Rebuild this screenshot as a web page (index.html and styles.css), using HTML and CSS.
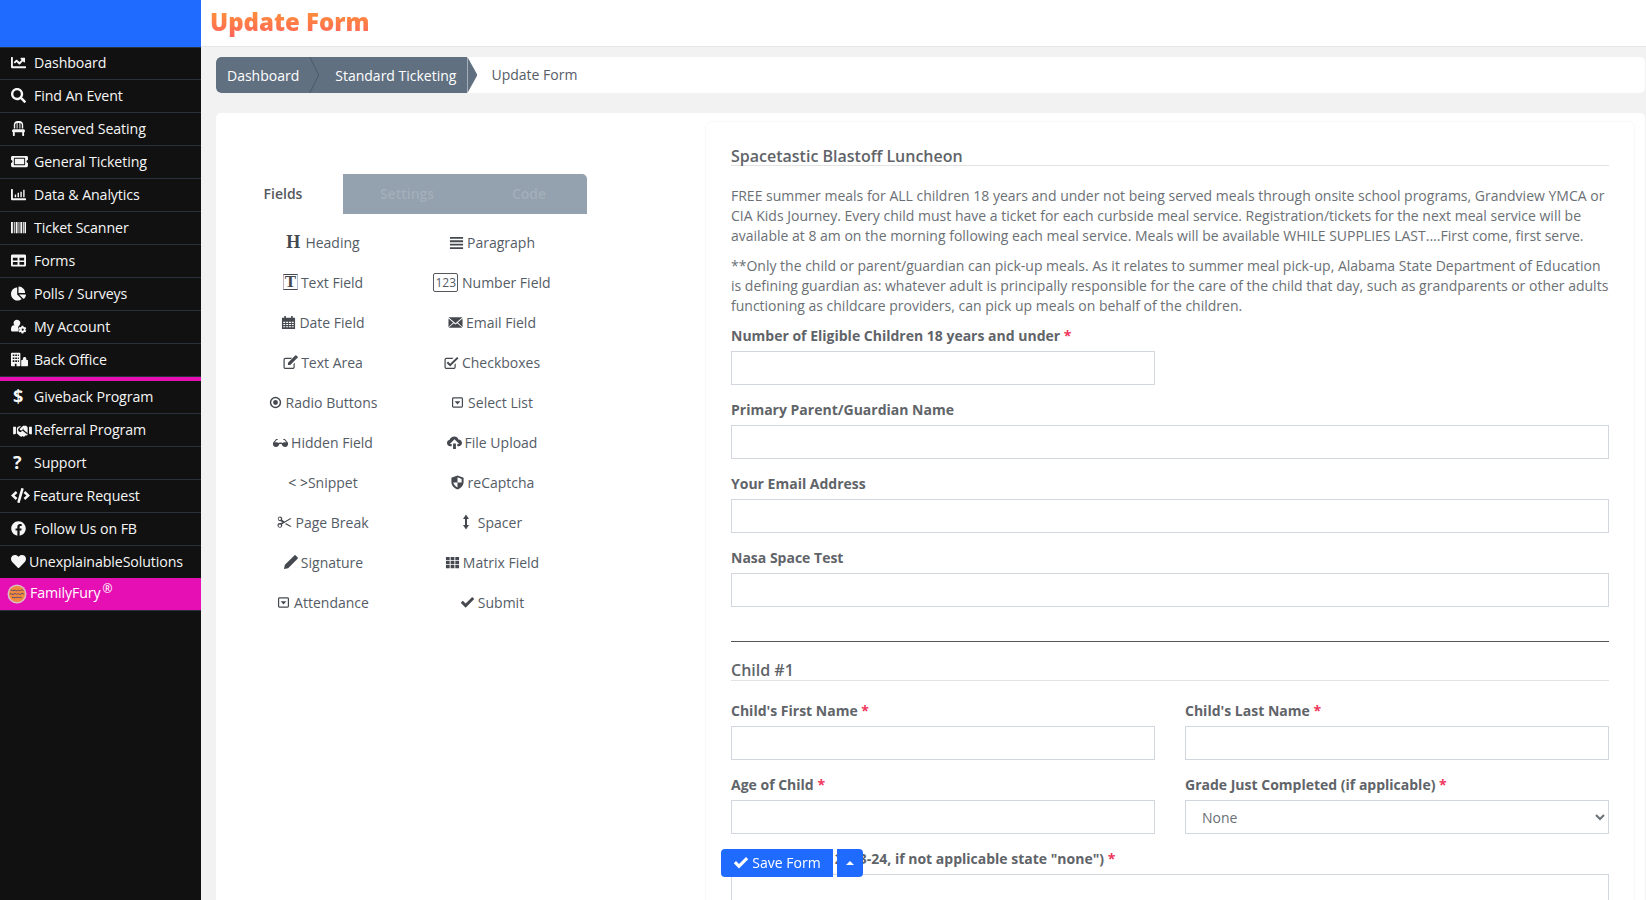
FILE: index.html
```html
<!DOCTYPE html>
<html lang="en">
<head>
<meta charset="utf-8">
<title>Update Form</title>
<link rel="stylesheet" href="styles.css">
</head>
<body>
<svg class="defs" aria-hidden="true">
  <symbol id="i-line" viewBox="0 0 512 512"><path d="M496 384H64V80c0-9-7-16-16-16H16C7 64 0 71 0 80v336c0 18 14 32 32 32h464c9 0 16-7 16-16v-32c0-9-7-16-16-16zM464 96H346c-21 0-32 26-17 41l32 32-74 74-73-73c-13-13-33-13-46 0l-68 68c-6 6-6 16 0 23l23 23c6 6 16 6 23 0l45-46 73 74c13 13 33 13 46 0l96-97 32 33c15 15 41 4 41-17V112c0-9-7-16-16-16z"/></symbol>
  <symbol id="i-search" viewBox="0 0 512 512"><path d="M505 443 405 343c-4-5-10-7-17-7h-16c28-35 44-80 44-128C416 93 323 0 208 0S0 93 0 208s93 208 208 208c48 0 93-16 128-44v16c0 7 2 13 7 17l100 100c9 9 24 9 34 0l28-28c9-10 9-25 0-34zM208 336c-71 0-128-57-128-128S137 80 208 80s128 57 128 128-57 128-128 128z"/></symbol>
  <symbol id="i-chair" viewBox="0 0 448 512"><path d="M112 128c0-30 20-54 48-62v190h32V64h64v192h32V66c28 8 48 32 48 62v128h48V128C384 57 327 0 256 0h-64C121 0 64 57 64 128v128h48V128zm333 209-11-32c-4-13-16-21-30-21H44c-14 0-26 8-30 21L3 337c-7 21 8 43 30 43v116c0 9 7 16 16 16h32c9 0 16-7 16-16V380h254v116c0 9 7 16 16 16h32c9 0 16-7 16-16V380c22 0 37-22 30-43z"/></symbol>
  <symbol id="i-ticket" viewBox="0 0 576 512"><path d="M128 160h320v192H128V160zm400 96c0 27 21 48 48 48v96c0 27-21 48-48 48H48c-27 0-48-21-48-48v-96c27 0 48-21 48-48s-21-48-48-48v-96c0-27 21-48 48-48h480c27 0 48 21 48 48v96c-27 0-48 21-48 48zm-48-104c0-13-11-24-24-24H120c-13 0-24 11-24 24v208c0 13 11 24 24 24h336c13 0 24-11 24-24V152z"/></symbol>
  <symbol id="i-bar" viewBox="0 0 512 512"><path d="M332 352h24c6 0 12-6 12-12V172c0-6-6-12-12-12h-24c-6 0-12 6-12 12v168c0 6 6 12 12 12zm96 0h24c6 0 12-6 12-12V108c0-6-6-12-12-12h-24c-6 0-12 6-12 12v232c0 6 6 12 12 12zm-288 0h24c6 0 12-6 12-12v-72c0-6-6-12-12-12h-24c-6 0-12 6-12 12v72c0 6 6 12 12 12zm96 0h24c6 0 12-6 12-12V204c0-6-6-12-12-12h-24c-6 0-12 6-12 12v136c0 6 6 12 12 12zm260 32H64V80c0-9-7-16-16-16H16C7 64 0 71 0 80v336c0 18 14 32 32 32h464c9 0 16-7 16-16v-32c0-9-7-16-16-16z"/></symbol>
  <symbol id="i-barcode" viewBox="0 0 512 512"><path d="M0 64h64v384H0zM96 64h32v384H96zM160 64h64v384h-64zM256 64h32v384h-32zM320 64h64v384h-64zM416 64h32v384h-32zM464 64h48v384h-48z"/></symbol>
  <symbol id="i-table" viewBox="0 0 512 512"><path d="M48 48h416c27 0 48 21 48 48v320c0 27-21 48-48 48H48c-27 0-48-21-48-48V96c0-27 21-48 48-48zm16 112v96h160v-96H64zm224 0v96h160v-96H288zM64 304v96h160v-96H64zm224 0v96h160v-96H288z" fill-rule="evenodd"/></symbol>
  <symbol id="i-pie" viewBox="0 0 544 512"><path d="M528 288H290l158 158c6 6 16 6 22 1 39-36 65-85 73-141 1-10-6-18-15-18zm-16-64C504 103 409 8 288 0c-9-1-16 7-16 16v224h224c9 0 17-7 16-16zM224 288V50c0-9-8-16-18-15C87 52-4 156 0 280c4 127 114 232 241 232 51 0 98-17 136-45 7-5 8-16 2-22L224 288z"/></symbol>
  <symbol id="i-usercog" viewBox="0 0 640 512"><path d="M224 256c71 0 128-57 128-128S295 0 224 0 96 57 96 128s57 128 128 128zm319 98 26-15c3-2 4-5 3-8-7-21-18-40-33-56-2-3-5-3-8-2l-26 15c-11-9-23-16-36-21v-30c0-3-2-6-5-7-22-5-44-5-66 0-3 1-5 4-5 7v30c-13 5-25 12-36 21l-26-15c-3-1-6-1-8 2-15 16-26 35-33 56-1 3 0 6 3 8l26 15c-2 14-2 28 0 42l-26 15c-3 2-4 5-3 8 7 21 18 40 33 56 2 3 5 3 8 2l26-15c11 9 23 16 36 21v30c0 3 2 6 5 7 22 5 44 5 66 0 3-1 5-4 5-7v-30c13-5 25-12 36-21l26 15c3 1 6 1 8-2 15-16 26-35 33-56 1-3 0-6-3-8l-26-15c2-14 2-28 0-42zm-103 61a40 40 0 1 1 0-80 40 40 0 0 1 0 80zM315 501c-7-10-11-23-11-36v-10c-28-22-33-62-11-90l-1-12c-30-36-26-85 0-118 5-5 10-9 16-13-15-6-28-9-44-9h-17c-22 10-47 16-73 16s-51-6-73-16h-17C60 213 0 273 0 347v37c0 35 29 64 64 64h251v53z"/></symbol>
  <symbol id="i-building" viewBox="0 0 640 512"><path d="M32 0h288c18 0 32 14 32 32v448c0 18-14 32-32 32H208v-96h-64v96H32c-18 0-32-14-32-32V32C0 14 14 0 32 0zm32 64v64h64V64H64zm0 112v64h64v-64H64zm0 112v64h64v-64H64zM160 64v64h64V64h-64zm0 112v64h64v-64h-64zm0 112v64h64v-64h-64zM256 64v64h40V64h-40zm0 112v64h40v-64h-40zm0 112v64h40v-64h-40z" fill-rule="evenodd"/><path d="M384 512V280l64-16v-48c0-30 30-56 64-56s64 26 64 56v48l64 16v200c0 18-14 32-32 32H384z"/></symbol>
  <symbol id="i-hands" viewBox="0 0 640 512"><path d="M434 128H354c-8 0-15 3-21 8l-92 84c-16 15-17 41-2 56 14 15 42 16 56 2l62-57c3-2 8-2 11 1 3 3 3 8 0 11l-26 24 146 119c3 2 5 5 7 7V180l-28-28c-6-6-14-24-33-24zM544 160v224c0 18 14 32 32 32h64V160h-96zM0 416h64c18 0 32-14 32-32V160H0v256zm462-4L316 293l-29 27c-29 26-73 24-99-4-27-29-25-73 4-100l80-73h-65c-19 0-27 18-33 24l-46 33v204h18l91 82c27 22 67 18 90-9l1-1 18 15c16 13 39 11 52-5l31-38 5 5c14 11 34 9 45-5l9-12c11-14 9-34-5-45z"/></symbol>
  <symbol id="i-code" viewBox="0 0 640 512"><path d="m278 511-61-18c-6-2-10-8-8-15L345 9c2-6 8-10 15-8l61 18c6 2 10 8 8 15L293 503c-2 6-9 10-15 8zM164 399l44-47c4-5 4-13-1-17l-91-79 91-79c5-4 5-12 1-17l-44-47c-4-5-12-5-17-1L4 247c-5 5-5 13 0 18l143 134c5 4 13 4 17 0zm329 0 143-134c5-5 5-13 0-18L493 113c-5-4-13-4-17 1l-44 47c-4 5-4 13 1 17l91 78-91 79c-5 4-5 12-1 17l44 47c4 5 12 5 17 0z"/></symbol>
  <symbol id="i-fb" viewBox="0 0 512 512"><path d="M504 256C504 119 393 8 256 8S8 119 8 256c0 124 91 227 209 245V328h-63v-72h63v-55c0-62 37-96 94-96 27 0 55 5 55 5v61h-31c-31 0-40 19-40 39v46h69l-11 72h-58v173c118-18 209-121 209-245z"/></symbol>
  <symbol id="i-heart" viewBox="0 0 512 512"><path d="M462 62c-55-47-136-38-186 14l-20 20-20-20C186 24 105 15 50 62-13 116-16 212 40 270l193 199c13 13 33 13 46 0l193-199c56-58 53-154-10-208z"/></symbol>
  <symbol id="i-bars" viewBox="0 0 16 16"><path d="M1 2h14v1.900H1zM1 5.700h14v1.900H1zM1 9.400h14v1.900H1zM1 13.100h14V15H1z"/></symbol>
  <symbol id="i-cal" viewBox="0 0 16 16"><path d="M1 3h2.500V1h1.700v2h5.600V1h1.700v2H15v12H1zM2.400 7.200v1.200h2.100V7.200zm3.100 0v1.200h2.100V7.200zm3 0v1.200h2.100V7.200zm3 0v1.200h2.100V7.200zM2.400 9.500v1.200h2.100V9.500zm3.100 0v1.200h2.100V9.500zm3 0v1.200h2.100V9.500zm3 0v1.200h2.100V9.500zM2.400 11.900v1.200h2.100v-1.200zm3.100 0v1.200h2.100v-1.200zm3 0v1.200h2.100v-1.200zm3 0v1.200h2.100v-1.200z" fill-rule="evenodd"/></symbol>
  <symbol id="i-mail" viewBox="0 0 16 16"><path d="M.5 2.500h15L8 8.700zM.5 3.700l5 4.300-5 5zM15.500 3.700V13l-5-5zM6.200 8.700 8 10.200l1.800-1.500 5.500 5H.7z"/></symbol>
  <symbol id="i-edit" viewBox="0 0 16 16"><path d="M2.800 3h7L8.500 4.300H2.800c-.5 0-1 .5-1 1v7.400c0 .5.500 1 1 1h7.400c.5 0 1-.5 1-1V9.500l1.300-1.300v4.500c0 1.300-1 2.300-2.300 2.300H2.800C1.500 15 .5 14 .5 12.700V5.300C.5 4 1.500 3 2.800 3zM12 1.500l2.400 2.400-6.700 6.800H5.300V8.300zM13 .5l.900-.3 2 2-.3 .9-1 1L12 1.500z"/></symbol>
  <symbol id="i-checks" viewBox="0 0 16 16"><path d="M2.800 3h7.400l-1.300 1.300H2.800c-.5 0-1 .5-1 1v7.400c0 .5.500 1 1 1h7.400c.5 0 1-.5 1-1V10l1.300-1.300v4c0 1.300-1 2.300-2.300 2.300H2.800C1.500 15 .5 14 .5 12.700V5.300C.5 4 1.500 3 2.800 3zM6.500 12.200 2.800 8.500l1.500-1.500 2.200 2.200L14 2l1.500 1.500z"/></symbol>
  <symbol id="i-radio" viewBox="0 0 16 16"><path d="M8 1a7 7 0 1 1 0 14A7 7 0 0 1 8 1zm0 1.800a5.200 5.200 0 1 0 0 10.400A5.200 5.200 0 0 0 8 2.800zM8 5a3 3 0 1 1 0 6 3 3 0 0 1 0-6z" fill-rule="evenodd"/></symbol>
  <symbol id="i-caretbox" viewBox="0 0 16 16"><path d="M3 1.500h10c1 0 1.800.8 1.800 1.800v9.400c0 1-.8 1.800-1.800 1.800H3c-1 0-1.800-.8-1.800-1.800V3.300c0-1 .8-1.800 1.800-1.800zm0 1.500c-.2 0-.3.100-.3.300v9.400c0 .2.100.3.300.3h10c.2 0 .3-.1.300-.3V3.300c0-.2-.1-.3-.3-.3zm1.500 3.500h7L8 10.500z" fill-rule="evenodd"/></symbol>
  <symbol id="i-glasses" viewBox="0 0 16 16"><path d="M3.300 4.200h1.500l.3 1H3.900L1.600 8.100c1.300-.6 3.500-.6 4.600.4.500-.3 1.100-.4 1.800-.4s1.300.1 1.800.4c1.100-1 3.300-1 4.600-.4l-2.300-2.900h-1.200l.3-1h1.500L16 8.300v1.600c0 1.700-1.300 2.900-3.100 2.900-1.900 0-3.300-1.300-3.500-2.900-.5-.3-2.300-.3-2.800 0-.2 1.600-1.600 2.900-3.500 2.900C1.300 12.800 0 11.600 0 9.900V8.300z"/></symbol>
  <symbol id="i-cloud" viewBox="0 0 16 16"><path d="M8 1.500c2 0 3.700 1.300 4.200 3.200C14.400 4.800 16 6.500 16 8.500c0 2-1.600 3.500-3.600 3.500H11V9.500h2L8 4.500l-5 5h2V12H3.500C1.500 12 0 10.500 0 8.500c0-1.700 1.200-3.100 2.800-3.400C3.300 3 5.500 1.500 8 1.500zM6.500 9h3v6h-3z"/></symbol>
  <symbol id="i-shield" viewBox="0 0 16 16"><path d="M8 .5 14.500 2.800v5c0 3.500-2.500 6.200-6.500 7.700-4-1.500-6.500-4.200-6.500-7.700v-5zm0 2V8H3.600c.3 2.300 2.100 4 4.400 5.200V8h4.400V4.200z" fill-rule="evenodd"/></symbol>
  <symbol id="i-scissors" viewBox="0 0 16 16"><path d="M3 1.500a2.600 2.600 0 0 1 2.400 3.600L8 6.800l6-3.400 1.800.3L5.400 9.900A2.600 2.600 0 1 1 4 8.600l1.800-1-1.700-.9A2.600 2.600 0 1 1 3 1.500zm0 1.300a1.300 1.300 0 1 0 0 2.600 1.300 1.300 0 0 0 0-2.600zm0 7.300a1.300 1.300 0 1 0 0 2.600 1.300 1.300 0 0 0 0-2.600zM9.900 8.900l5.900 3.300-1.800.3-5.500-2.800z" fill-rule="evenodd"/></symbol>
  <symbol id="i-arrows" viewBox="4 0 8 16"><path d="M8 .5 11 5H9v6h2l-3 4.500L5 11h2V5H5z"/></symbol>
  <symbol id="i-pencil" viewBox="0 0 16 16"><path d="M11 1.500l3.500 3.500-9 9L1 15l1-4.500zM12 .5l1-.5 3 3-.5 1-1 1L11 1.500z"/></symbol>
  <symbol id="i-grid" viewBox="0 0 16 16"><path d="M1 2h4v3.500H1zM6 2h4v3.500H6zM11 2h4v3.500h-4zM1 6.300h4v3.400H1zM6 6.300h4v3.400H6zM11 6.300h4v3.400h-4zM1 10.500h4V14H1zM6 10.500h4V14H6zM11 10.500h4V14h-4z"/></symbol>
  <symbol id="i-check" viewBox="0 0 16 16"><path d="M6 13.500.8 8.300l2.200-2.200L6 9.100l7-7 2.200 2.200z"/></symbol>
  <symbol id="i-logo" viewBox="0 0 20 20"><circle cx="10" cy="10" r="9.500" fill="#d9bcc9"/><circle cx="10" cy="10" r="8" fill="#f08a3c"/><path d="M3.500 6.500c1.500-1.500 2 1 3.500 0s2 1 3.500 0 2 1 3 0 2-.5 3 0M3 10c1.500-1 2.500 1.500 4 0s2 1 3.500 0 2 1.500 3.500 0 2 0 3 0M5 13.500c1.500-1 2.500 1 4 0s2 .5 3 0 2 .5 3 0" fill="none" stroke="#5d4a78" stroke-width="1"/></symbol>
</svg>

<div class="app">
  <nav class="sidebar">
    <div class="brand"></div>
    <ul class="menu menu-main">
      <li class="item"><span class="ic"><svg class="si"><use href="#i-line"/></svg></span>Dashboard</li>
      <li class="item"><span class="ic"><svg class="si"><use href="#i-search"/></svg></span>Find An Event</li>
      <li class="item"><span class="ic"><svg class="si"><use href="#i-chair"/></svg></span>Reserved Seating</li>
      <li class="item"><span class="ic"><svg class="si si-w"><use href="#i-ticket"/></svg></span>General Ticketing</li>
      <li class="item"><span class="ic"><svg class="si"><use href="#i-bar"/></svg></span>Data &amp; Analytics</li>
      <li class="item"><span class="ic"><svg class="si"><use href="#i-barcode"/></svg></span>Ticket Scanner</li>
      <li class="item"><span class="ic"><svg class="si"><use href="#i-table"/></svg></span>Forms</li>
      <li class="item"><span class="ic"><svg class="si"><use href="#i-pie"/></svg></span>Polls / Surveys</li>
      <li class="item"><span class="ic"><svg class="si si-w"><use href="#i-usercog"/></svg></span>My Account</li>
      <li class="item"><span class="ic"><svg class="si si-w"><use href="#i-building"/></svg></span>Back Office</li>
    </ul>
    <div class="divider"></div>
    <ul class="menu">
      <li class="item"><span class="ic ic-glyph">$</span>Giveback Program</li>
      <li class="item"><span class="ic ic-hands"><svg class="si si-hands"><use href="#i-hands"/></svg></span>Referral Program</li>
      <li class="item"><span class="ic ic-glyph">?</span>Support</li>
      <li class="item"><span class="ic ic-code"><svg class="si si-wide"><use href="#i-code"/></svg></span>Feature Request</li>
      <li class="item"><span class="ic"><svg class="si"><use href="#i-fb"/></svg></span>Follow Us on FB</li>
      <li class="item item-last"><span class="ic ic-heart"><svg class="si"><use href="#i-heart"/></svg></span>UnexplainableSolutions</li>
      <li class="item item-pink"><svg class="logo"><use href="#i-logo"/></svg><span class="pink-text">FamilyFury<sup class="reg">®</sup></span></li>
    </ul>
  </nav>

  <main class="main">
    <header class="topbar"><h1 class="title">Update Form</h1></header>

    <div class="crumbs">
      <span class="crumb crumb-first">Dashboard</span>
      <span class="crumb crumb-second">Standard Ticketing</span>
      <span class="crumb-current">Update Form</span>
    </div>

    <section class="card">
      <aside class="builder">
        <div class="tabs">
          <div class="tab tab-active">Fields</div>
          <div class="tab-group">
            <div class="tab tab-off tab-settings">Settings</div>
            <div class="tab tab-off tab-codes">Code</div>
          </div>
        </div>
        <div class="fields">
          <div class="field"><span class="fi-h">H</span>Heading</div>
          <div class="field"><svg class="fi"><use href="#i-bars"/></svg>Paragraph</div>
          <div class="field"><span class="fi-t">T</span>Text Field</div>
          <div class="field"><span class="fi-num">123</span>Number Field</div>
          <div class="field"><svg class="fi"><use href="#i-cal"/></svg>Date Field</div>
          <div class="field"><svg class="fi"><use href="#i-mail"/></svg>Email Field</div>
          <div class="field"><svg class="fi"><use href="#i-edit"/></svg>Text Area</div>
          <div class="field"><svg class="fi"><use href="#i-checks"/></svg>Checkboxes</div>
          <div class="field"><svg class="fi fi-s"><use href="#i-radio"/></svg>Radio Buttons</div>
          <div class="field"><svg class="fi fi-s"><use href="#i-caretbox"/></svg>Select List</div>
          <div class="field"><svg class="fi"><use href="#i-glasses"/></svg>Hidden Field</div>
          <div class="field"><svg class="fi"><use href="#i-cloud"/></svg>File Upload</div>
          <div class="field"><span class="fi-code">&lt; &gt;</span>Snippet</div>
          <div class="field"><svg class="fi"><use href="#i-shield"/></svg>reCaptcha</div>
          <div class="field"><svg class="fi"><use href="#i-scissors"/></svg>Page Break</div>
          <div class="field"><svg class="fi fi-a"><use href="#i-arrows"/></svg>Spacer</div>
          <div class="field"><svg class="fi"><use href="#i-pencil"/></svg>Signature</div>
          <div class="field"><svg class="fi"><use href="#i-grid"/></svg>Matrix Field</div>
          <div class="field"><svg class="fi fi-s"><use href="#i-caretbox"/></svg>Attendance</div>
          <div class="field"><svg class="fi"><use href="#i-check"/></svg>Submit</div>
        </div>
      </aside>

      <form class="preview">
        <h2 class="sec">Spacetastic Blastoff Luncheon</h2>
        <p class="para para-first">FREE summer meals for ALL children 18 years and under not being served meals through onsite school programs, Grandview YMCA or CIA Kids Journey. Every child must have a ticket for each curbside meal service. Registration/tickets for the next meal service will be available at 8 am on the morning following each meal service. Meals will be available WHILE SUPPLIES LAST....First come, first serve.</p>
        <p class="para">**Only the child or parent/guardian can pick-up meals. As it relates to summer meal pick-up, Alabama State Department of Education is defining guardian as: whatever adult is principally responsible for the care of the child that day, such as grandparents or other adults functioning as childcare providers, can pick up meals on behalf of the children.</p>

        <div class="row row-half">
          <label class="group"><span class="lab">Number of Eligible Children 18 years and under <b class="req">*</b></span><input class="ctl" type="text"></label>
        </div>
        <div class="row row-full"><label class="group"><span class="lab">Primary Parent/Guardian Name</span><input class="ctl" type="text"></label></div>
        <div class="row row-full"><label class="group"><span class="lab">Your Email Address</span><input class="ctl" type="text"></label></div>
        <div class="row row-full"><label class="group"><span class="lab">Nasa Space Test</span><input class="ctl" type="text"></label></div>

        <hr class="rule">
        <h2 class="sec sec-child">Child #1</h2>

        <div class="row row-first">
          <label class="group"><span class="lab">Child's First Name <b class="req">*</b></span><input class="ctl" type="text"></label>
          <label class="group"><span class="lab">Child's Last Name <b class="req">*</b></span><input class="ctl" type="text"></label>
        </div>
        <div class="row">
          <label class="group"><span class="lab">Age of Child <b class="req">*</b></span><input class="ctl" type="text"></label>
          <label class="group"><span class="lab">Grade Just Completed (if applicable) <b class="req">*</b></span>
            <select class="ctl ctl-select"><option>None</option></select></label>
        </div>
        <div class="row row-full"><label class="group"><span class="lab">Current Grade 2023-24, if not applicable state "none") <b class="req">*</b></span><input class="ctl" type="text"></label></div>
      </form>
    </section>
  </main>
</div>

<div class="save">
  <button class="btn btn-save" type="button"><svg class="btn-check"><use href="#i-check"/></svg><span class="btn-text">Save Form</span></button>
  <button class="btn btn-caret" type="button"><span class="caret"></span></button>
</div>
</body>
</html>
```

FILE: styles.css
```css
* { box-sizing: border-box; }
html, body { margin: 0; height: 100%; overflow: hidden; }
body { font-family: "Open Sans", sans-serif; font-size: 14px; color: #5f6469; background: #f2f2f2; }
.defs { display: none; }

.app { display: flex; height: 900px; }

/* Sidebar */
.sidebar { width: 201px; flex: none; background: #111; color: #fff; }
.brand { height: 48px; background: #206bff; border-bottom: 1px solid #2a323d; }
.menu { list-style: none; margin: 0; padding: 0; }
.item { height: 33px; display: flex; align-items: center; padding: 0 0 2px 11px; border-bottom: 1px solid #2a323d; color: #f6f6f6; font-size: 14.2px; letter-spacing: -.1px; white-space: nowrap; }
.menu-main .item:first-child { height: 32px; }
.item-last { height: 32px; border-bottom: 0; }
.ic { width: 23px; flex: none; display: flex; align-items: center; }
.si { width: 15px; height: 15px; fill: #f6f6f6; display: block; }
.si-w { width: 17px; height: 15px; }
.si-wide { width: 19px; }
.si-hands { width: 19px; height: 15px; }
.ic-hands { padding-left: 2px; }
.ic-glyph { font-weight: 700; font-size: 18px; line-height: 1; padding-left: 2px; }
.ic-code { width: 22px; }
.ic-heart { width: 18px; }
.divider { height: 4px; background: #e60fb4; }
.item-pink { padding: 0 0 1px 7px; background: #e60fb4; color: #fff; }
.logo { width: 20px; height: 20px; margin-right: 3px; flex: none; }
.pink-text { position: relative; top: -1px; }
.reg { font-size: 12px; line-height: 1; margin-left: 2px; vertical-align: 5px; }

/* Main */
.main { flex: 1; min-width: 0; display: flex; flex-direction: column; padding-right: 1px; }
.topbar { height: 47px; margin-right: -1px; background: #fff; border-bottom: 1px solid #e6e6e6; padding-left: 9px; }
.title { margin: 0; width: max-content; font-size: 24px; line-height: 43px; font-weight: 800; letter-spacing: 0; background: linear-gradient(180deg, #ff9436 20%, #ff6459 85%); -webkit-background-clip: text; background-clip: text; color: transparent; }

.crumbs { margin: 10px 0 0 15px; height: 36px; background: #fff; border-radius: 5px; display: flex; align-items: center; overflow: hidden; }
.crumb { height: 36px; display: flex; align-items: center; background: #607080; color: #fff; position: relative; }
.crumb-first { padding: 0 10px 0 11px; border-radius: 5px 0 0 5px; }
.crumb-second { padding: 0 11px 0 26px; }
.crumb-first::after { content: ""; position: absolute; top: 0; right: -10px; width: 10px; height: 36px; z-index: 1; background: #4a5967; clip-path: polygon(0 0, 1px 0, 100% 50%, 1px 100%, 0 100%, calc(100% - 1px) 50%); }
.crumb-second::after { content: ""; position: absolute; top: 0; right: -10px; width: 10px; height: 36px; background: #607080; clip-path: polygon(0 0, 100% 50%, 0 100%); }
.crumb-current { margin-left: 24px; color: #555c66; position: relative; top: -1px; }

.card { margin: 20px 0 0 15px; flex: 1; min-height: 0; background: #fff; border-radius: 5px 5px 0 0; display: flex; align-items: flex-start; }

/* Field builder */
.builder { width: 490px; flex: none; }
.tabs { margin: 61px 0 0 21px; display: flex; width: 350px; height: 40px; }
.tab { height: 40px; display: flex; align-items: center; justify-content: center; font-weight: 600; font-size: 14px; padding-bottom: 2px; }
.tab-active { width: 106px; padding-right: 14px; color: #55585c; }
.tab-group { width: 244px; display: flex; background: #94a1ae; border-radius: 0 5px 0 0; }
.tab-off { color: #a3afbb; }
.tab-settings { width: 128px; }
.tab-codes { width: 116px; }

.fields { margin: 8px 0 0 22px; width: 338px; display: grid; grid-template-columns: 170px 168px; grid-auto-rows: 40px; color: #555c66; font-size: 14px; }
.field { display: flex; align-items: center; justify-content: center; gap: 3px; white-space: nowrap; }
.fi { width: 15px; height: 15px; fill: #45494f; flex: none; }
.fi-s { width: 13px; height: 13px; margin-right: 1px; }
.fi-a { width: 8px; height: 16px; margin-right: 5px; }
.fi-h { font-family: "Liberation Serif", serif; font-weight: 700; font-size: 18px; line-height: 1; color: #45494f; margin-right: 2px; }
.fi-t { font-family: "Liberation Serif", serif; font-weight: 700; font-size: 17px; line-height: 14px; width: 15px; height: 16px; text-align: center; color: #45494f; border-left: 1px solid #c8b0c0; border-right: 1px solid #b0c0d0; border-top: 1px solid #45494f; border-bottom: 1px solid #45494f; }
.fi-num { border: 1px solid #55585c; border-radius: 2px; font-size: 12px; line-height: 17px; padding: 0 1px; color: #555c66; margin-right: 1px; }
.fi-code { color: #45494f; font-size: 14px; margin-right: -3px; }

/* Preview form */
.preview { width: 928px; flex: none; margin-top: 9px; padding: 23px 25px 0; background: #fff; border-radius: 5px 5px 0 0; box-shadow: 0 0 2px rgba(0,0,0,.09); }
.sec { margin: 0; font-size: 16px; font-weight: 600; line-height: 22px; color: #5f6469; border-bottom: 1px solid #e3e3e3; height: 21px; }
.para { margin: 0 0 10px; line-height: 20px; color: #6b7075; font-size: 14px; }
.para-first { margin-top: 20px; }
.row { display: grid; grid-template-columns: 424px 424px; column-gap: 30px; margin-bottom: 15px; }
.row-full { grid-template-columns: 1fr; }
.row-half { grid-template-columns: 424px; }
.group { display: flex; flex-direction: column; min-width: 0; }
.lab { display: block; font-weight: 700; font-size: 14px; line-height: 20px; margin-bottom: 5px; color: #5f6469; white-space: nowrap; }
.req { color: #f0365c; font-weight: 700; }
.ctl { display: block; width: 100%; height: 34px; border: 1px solid #d2d6de; background: #fff; border-radius: 0; padding: 0 12px; font: 14px "Open Sans", sans-serif; color: #6b7075; }
.rule { margin: 34px 0 0; border: 0; border-top: 1px solid #555; }
.sec-child { margin-top: 17px; height: 22px; }
.row-first { margin-top: 20px; }

/* Save */
.save { position: fixed; left: 721px; top: 849px; display: flex; gap: 4px; }
.btn { height: 28px; border: 0; padding: 0; background: #206bff; color: #fff; font: 14px "Open Sans", sans-serif; display: flex; align-items: center; justify-content: center; }
.btn-save { width: 112px; border-radius: 4px 0 0 4px; gap: 3px; }
.btn-text { position: relative; top: -1px; }
.btn-caret { width: 26px; border-radius: 0 4px 4px 0; }
.btn-check { width: 16px; height: 16px; fill: #fff; }
.caret { width: 0; height: 0; border-left: 4px solid transparent; border-right: 4px solid transparent; border-bottom: 4px solid #fff; }
```
